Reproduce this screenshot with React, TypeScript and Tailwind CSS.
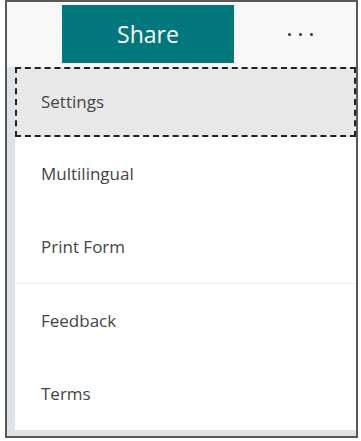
import React from "react";

const items = [
  { label: "Multilingual", h: "h-[74px]" },
  { label: "Print Form", h: "h-[72px]" },
];

const bottomItems = [
  { label: "Feedback", h: "h-[74px]" },
  { label: "Terms", h: "h-[72px]" },
];

export default function App() {
  return (
    <div
      className="w-[361px] h-[441px] bg-white pl-[5px] pr-[3px] pb-[3px]"
      style={{ fontFamily: '"Open Sans", "Noto Sans", sans-serif' }}
    >
      <div className="h-full border-2 border-[#595959] flex flex-col bg-[#f8f8f8]">
        {/* top bar */}
        <div className="h-[65px] shrink-0 flex items-start">
          <button className="ml-[55px] mt-[3px] w-[172px] h-[58px] bg-[#03787c] text-white text-[23px] flex items-center justify-center">
            Share
          </button>
          <div className="ml-[54px] mt-[31px] flex gap-[8px]">
            <span className="w-[3px] h-[3px] rounded-full bg-[#333]" />
            <span className="w-[3px] h-[3px] rounded-full bg-[#333]" />
            <span className="w-[3px] h-[3px] rounded-full bg-[#333]" />
          </div>
        </div>

        {/* menu */}
        <div className="flex-1 flex bg-[#dde3e6]">
          <div className="w-[8px] shrink-0" />
          <div className="flex-1 flex flex-col mb-[6px] bg-white text-[#444] text-[17px]">
            <div className="h-[70px] flex items-center pl-[24px] bg-[#e8e8e8] border-2 border-dashed border-[#222]">
              Settings
            </div>
            {items.map((it) => (
              <div key={it.label} className={`${it.h} flex items-center pl-[26px]`}>
                {it.label}
              </div>
            ))}
            <div className="h-px bg-[#ececec]" />
            {bottomItems.map((it) => (
              <div key={it.label} className={`${it.h} flex items-center pl-[26px]`}>
                {it.label}
              </div>
            ))}
          </div>
        </div>
      </div>
    </div>
  );
}
